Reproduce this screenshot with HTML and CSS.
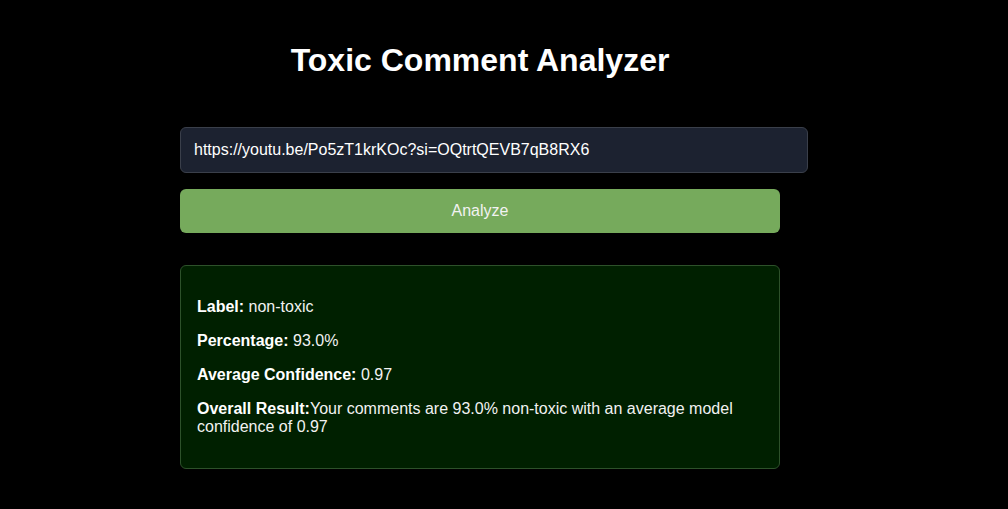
FILE: index.html
```html
<!DOCTYPE html>
<html>
<head>
<meta charset="utf-8">
<link rel="stylesheet" href="styles.css">
</head>
<body>
<div class="app">
  <h1 class="title">Toxic Comment Analyzer</h1>
  <form class="form">
    <input class="url-input" type="text" value="https://youtu.be/Po5zT1krKOc?si=OQtrtQEVB7qB8RX6">
    <button class="analyze-btn" type="button">Analyze</button>
  </form>
  <div class="result">
    <p><strong>Label:</strong> non-toxic</p>
    <p><strong>Percentage:</strong> 93.0%</p>
    <p><strong>Average Confidence:</strong> 0.97</p>
    <p><strong>Overall Result:</strong>Your comments are 93.0% non-toxic with an average model confidence of 0.97</p>
  </div>
</div>
</body>
</html>
```
FILE: styles.css
```css
html, body {
  margin: 0;
  padding: 0;
  background: #000;
  color: #fff;
  font-family: "Liberation Sans", Arial, sans-serif;
}
body {
  padding-right: 48px;
}
.app {
  width: 600px;
  margin: 0 auto;
  padding-top: 21px;
}
.title {
  font-size: 32px;
  font-weight: bold;
  text-align: center;
  margin: 21px 0 48px;
  line-height: 37px;
}
.form {
  display: flex;
  flex-direction: column;
  align-items: flex-start;
  gap: 16px;
}
.url-input {
  box-sizing: content-box;
  width: 600px;
  height: 18px;
  padding: 13px 13px;
  border: 1px solid #3a3f4a;
  border-radius: 6px;
  background: #1c2230;
  color: #fff;
  font-family: "Liberation Sans", Arial, sans-serif;
  font-size: 16px;
  outline: none;
}
.analyze-btn {
  width: 600px;
  height: 44px;
  border: none;
  border-radius: 6px;
  background: #76aa5c;
  color: #f2f2f2;
  font-family: "Liberation Sans", Arial, sans-serif;
  font-size: 16px;
}
.result {
  margin-top: 32px;
  padding: 16px;
  background: #002000;
  border: 1px solid #2d512a;
  border-radius: 6px;
  font-size: 16px;
  line-height: 18px;
  color: #f2f2f2;
}
.result p {
  margin: 16px 0;
}
.result strong {
  color: #fff;
}
```
